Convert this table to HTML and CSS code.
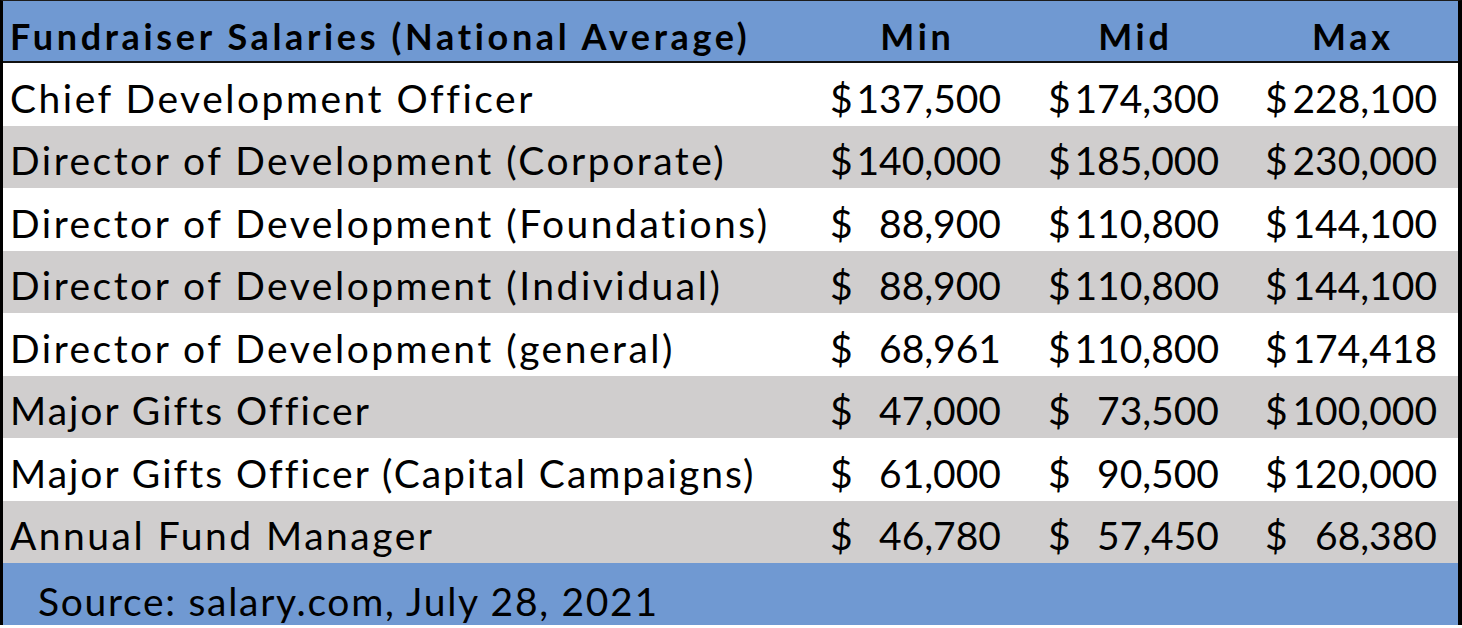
FILE: index.html
```html
<!DOCTYPE html>
<html lang="en">
<head>
<meta charset="utf-8">
<title>Fundraiser Salaries</title>
<link rel="stylesheet" href="styles.css">
</head>
<body>
<div class="sheet">
  <div class="row head">
    <div class="cell name">Fundraiser Salaries (National Average)</div>
    <div class="cell num c-min"><span class="label">Min</span></div>
    <div class="cell num c-mid"><span class="label">Mid</span></div>
    <div class="cell num c-max"><span class="label">Max</span></div>
  </div>
  <div class="row">
    <div class="cell name">Chief Development Officer</div>
    <div class="cell num c-min"><span>$</span><span>137,500</span></div>
    <div class="cell num c-mid"><span>$</span><span>174,300</span></div>
    <div class="cell num c-max"><span>$</span><span>228,100</span></div>
  </div>
  <div class="row alt">
    <div class="cell name">Director of Development (Corporate)</div>
    <div class="cell num c-min"><span>$</span><span>140,000</span></div>
    <div class="cell num c-mid"><span>$</span><span>185,000</span></div>
    <div class="cell num c-max"><span>$</span><span>230,000</span></div>
  </div>
  <div class="row">
    <div class="cell name">Director of Development (Foundations)</div>
    <div class="cell num c-min"><span>$</span><span>88,900</span></div>
    <div class="cell num c-mid"><span>$</span><span>110,800</span></div>
    <div class="cell num c-max"><span>$</span><span>144,100</span></div>
  </div>
  <div class="row alt">
    <div class="cell name">Director of Development (Individual)</div>
    <div class="cell num c-min"><span>$</span><span>88,900</span></div>
    <div class="cell num c-mid"><span>$</span><span>110,800</span></div>
    <div class="cell num c-max"><span>$</span><span>144,100</span></div>
  </div>
  <div class="row">
    <div class="cell name">Director of Development (general)</div>
    <div class="cell num c-min"><span>$</span><span>68,961</span></div>
    <div class="cell num c-mid"><span>$</span><span>110,800</span></div>
    <div class="cell num c-max"><span>$</span><span>174,418</span></div>
  </div>
  <div class="row alt">
    <div class="cell name tight">Major Gifts Officer</div>
    <div class="cell num c-min"><span>$</span><span>47,000</span></div>
    <div class="cell num c-mid"><span>$</span><span>73,500</span></div>
    <div class="cell num c-max"><span>$</span><span>100,000</span></div>
  </div>
  <div class="row">
    <div class="cell name tight">Major Gifts Officer (Capital Campaigns)</div>
    <div class="cell num c-min"><span>$</span><span>61,000</span></div>
    <div class="cell num c-mid"><span>$</span><span>90,500</span></div>
    <div class="cell num c-max"><span>$</span><span>120,000</span></div>
  </div>
  <div class="row alt">
    <div class="cell name">Annual Fund Manager</div>
    <div class="cell num c-min"><span>$</span><span>46,780</span></div>
    <div class="cell num c-mid"><span>$</span><span>57,450</span></div>
    <div class="cell num c-max"><span>$</span><span>68,380</span></div>
  </div>
  <div class="foot">Source: salary.com, July 28, 2021</div>
</div>
</body>
</html>
```

FILE: styles.css
```css
html, body {
  margin: 0;
  padding: 0;
  background: #ffffff;
}

body {
  width: 1462px;
  height: 628px;
  overflow: hidden;
  font-family: Lato, "Liberation Sans", sans-serif;
  color: #000000;
}

.sheet {
  width: 1462px;
  box-sizing: border-box;
  border-left: 3px solid #000000;
  border-right: 4px solid #000000;
  border-top: 1px solid #1c1c1c;
}

.row {
  display: grid;
  grid-template-columns: 817px 218px 218px 202px;
  height: 62.5px;
  background: #ffffff;
  font-size: 39px;
  line-height: 1.2;
}

.row.alt {
  background: #d0cece;
}

.row.head {
  height: 60px;
  background: #7099d2;
  border-bottom: 2px solid #111111;
  font-size: 36px;
  font-weight: 700;
}

.cell {
  display: flex;
  align-items: flex-end;
  padding-bottom: 4px;
  white-space: nowrap;
}

.head .cell {
  padding-bottom: 3px;
}

.name {
  padding-left: 7px;
  letter-spacing: 2.5px;
}

.name.tight {
  letter-spacing: 2px;
}

.head .name {
  letter-spacing: 3.65px;
}

.num {
  justify-content: space-between;
}

.c-min,
.c-mid {
  padding-left: 10px;
  padding-right: 37px;
}

.c-max {
  padding-left: 9px;
  padding-right: 21px;
}

.head .num {
  justify-content: center;
}

.label {
  letter-spacing: 3.65px;
  margin-right: -3.65px;
}

.foot {
  height: 62px;
  background: #7099d2;
  font-size: 39px;
  line-height: 1.2;
  letter-spacing: 1.7px;
  padding-left: 35px;
  display: flex;
  align-items: flex-end;
  box-sizing: border-box;
  padding-bottom: 0;
}
```
